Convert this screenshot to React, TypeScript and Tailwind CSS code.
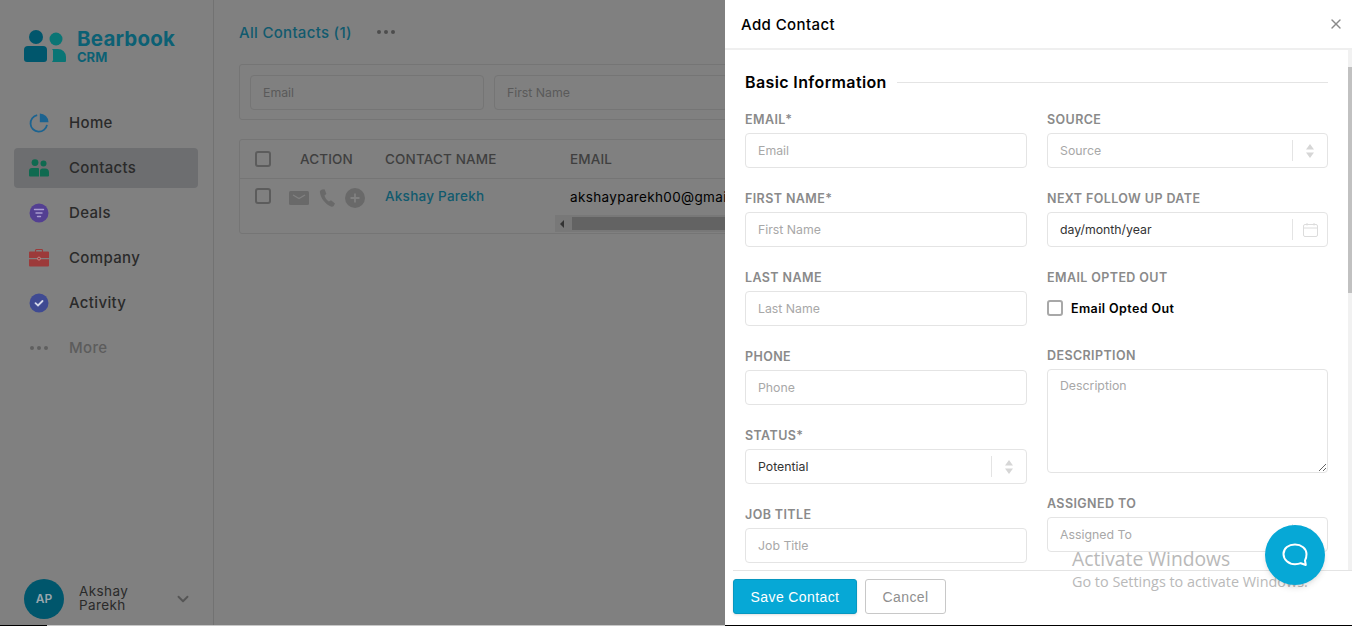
import { ChevronDown, X } from "lucide-react";

const font = "font-['Inter','Liberation_Sans',sans-serif]";

const navItems = [
  { label: "Home", icon: <HomeIcon /> },
  { label: "Contacts", icon: <ContactsIcon />, active: true },
  { label: "Deals", icon: <DealsIcon /> },
  { label: "Company", icon: <CompanyIcon /> },
  { label: "Activity", icon: <ActivityIcon /> },
];

function HomeIcon() {
  return (
    <svg width="20" height="20" viewBox="0 0 20 20" fill="none">
      <path d="M8.200 2.200A8.300 8.300 0 1 0 18 11.800" stroke="#1c6390" strokeWidth="1.800" fill="none" />
      <path d="M10.800 0.500a8.700 8.700 0 0 1 8.700 8.700h-8.700Z" fill="#1c6390" />
    </svg>
  );
}

function ContactsIcon() {
  return (
    <svg width="20" height="18" viewBox="0 0 20 18">
      <circle cx="6" cy="3.600" r="3.400" fill="#0f6a50" />
      <circle cx="14.500" cy="4.600" r="3" fill="#0f6a50" />
      <path d="M0 12a3 3 0 0 1 3-3h6a1.600 1.600 0 0 1 1 .5V17.500H1a1 1 0 0 1-1-1Z" fill="#0f6a50" />
      <path d="M11 11.500a2.400 2.400 0 0 1 2.400-2h2.600a4 4 0 0 1 4 4v3a1 1 0 0 1-1 1h-8Z" fill="#0f6a50" />
    </svg>
  );
}

function DealsIcon() {
  return (
    <svg width="20" height="20" viewBox="0 0 20 20">
      <circle cx="10" cy="10" r="9.500" fill="#533f92" />
      <path d="M5.500 6.500h9M7 10h6M8.500 13.500h3" stroke="#a99cd0" strokeWidth="1.400" strokeLinecap="round" />
    </svg>
  );
}

function CompanyIcon() {
  return (
    <svg width="20" height="18" viewBox="0 0 20 18">
      <path d="M6.500 3V1.500a1 1 0 0 1 1-1h5a1 1 0 0 1 1 1V3" stroke="#9c3a3a" strokeWidth="1.100" fill="none" />
      <path d="M0 3.500a1 1 0 0 1 1-1h18a1 1 0 0 1 1 1V9H0Z" fill="#9c3a3a" />
      <path d="M0 10.200h20V16.500a1 1 0 0 1-1 1H1a1 1 0 0 1-1-1Z" fill="#9c3a3a" />
      <circle cx="10" cy="9.600" r="1.500" fill="#9c3a3a" stroke="#d09090" strokeWidth="0.800" />
    </svg>
  );
}

function ActivityIcon() {
  return (
    <svg width="20" height="20" viewBox="0 0 20 20">
      <circle cx="10" cy="10" r="9.500" fill="#3f4a92" />
      <path d="M6.500 10.200l2.500 2.300 4.500-4.500" stroke="#d5d8ea" strokeWidth="1.800" fill="none" strokeLinecap="round" />
    </svg>
  );
}

function Logo() {
  return (
    <div className="flex items-center pl-[24px] pt-[29px]">
      <svg width="43" height="35" viewBox="0 0 43 35">
        <circle cx="12" cy="8" r="7" fill="#00566c" />
        <circle cx="32" cy="10" r="6.500" fill="#0a7575" />
        <path d="M0 21a4 4 0 0 1 4-4h15a4 4 0 0 1 4 4v9a3 3 0 0 1-3 3H3a3 3 0 0 1-3-3Z" fill="#00566c" />
        <path d="M28 20h6a8 8 0 0 1 8 8v4a1 1 0 0 1-1 1H28a4 4 0 0 0 1-4v-6a3 3 0 0 0-1-3Z" fill="#0a7575" />
      </svg>
      <div className="ml-[10px] -mt-[1px] flex flex-col text-[#0c6074] font-bold">
        <span className="text-[20.500px] leading-[22px] tracking-[0.2px]">Bearbook</span>
        <span className="text-[13px] leading-[14px]">CRM</span>
      </div>
    </div>
  );
}

function Sidebar() {
  return (
    <aside className="w-[214px] h-full shrink-0 flex flex-col border-r border-[#727272]">
      <Logo />
      <nav className="mt-[39px] ml-[14px] w-[184px] flex flex-col gap-[5px]">
        {navItems.map((item) => (
          <div
            key={item.label}
            className={`h-[40px] flex items-center rounded-[4px] ${item.active ? "bg-[#6d6e70]" : ""}`}
          >
            <span className="w-[55px] flex justify-center pr-[5px]">{item.icon}</span>
            <span className="text-[15px] font-medium text-[#2a2a2a] tracking-[0.35px]">{item.label}</span>
          </div>
        ))}
        <div className="h-[40px] flex items-center">
          <span className="w-[55px] flex justify-center gap-[3px] pr-[5px]">
            <i className="size-[4px] rounded-full bg-[#5f5f5f]" />
            <i className="size-[4px] rounded-full bg-[#5f5f5f]" />
            <i className="size-[4px] rounded-full bg-[#5f5f5f]" />
          </span>
          <span className="text-[15px] font-medium text-[#5c5c5c] tracking-[0.35px]">More</span>
        </div>
      </nav>
      <div className="mt-auto mb-[6px] ml-[24px] flex items-center">
        <div className="size-[40px] rounded-full bg-[#00566c] flex items-center justify-center text-[12px] font-semibold text-[#99a6ad]">
          AP
        </div>
        <div className="ml-[15px] -mt-[2px] w-[70px] text-[13.500px] leading-[14px] text-[#2a2a2a] tracking-[0.4px]">
          Akshay
          <br />
          Parekh
        </div>
        <ChevronDown size={18} strokeWidth={2.500} className="ml-[25px] text-[#555555]" />
      </div>
    </aside>
  );
}

function Filter({ label, width }: { label: string; width: string }) {
  return (
    <div className={`${width} h-[35px] shrink-0 border border-[#757575] rounded-[4px] flex items-center pl-[12px] pt-[3px] text-[12.300px] text-[#5a5a5a]`}>
      {label}
    </div>
  );
}

function Box() {
  return <span className="block size-[16px] shrink-0 border-2 border-[#5c5c5c] rounded-[3px]" />;
}

function ContactsTable() {
  return (
    <div className="mt-[19px] w-[700px] h-[95px] border border-[#757575] rounded-[3px]">
      <div className="h-[39px] flex items-center pl-[15px] border-b border-[#757575] text-[13.500px] font-medium text-[#3f3f3f] tracking-[0.15px]">
        <Box />
        <span className="ml-[29px] w-[85px]">ACTION</span>
        <span className="w-[185px]">CONTACT NAME</span>
        <span>EMAIL</span>
      </div>
      <div className="relative h-[54px] flex items-start pl-[15px] pt-[9px]">
        <Box />
        <span className="ml-[18px] w-[96px] flex items-center gap-[10px] text-[#5f5f5f]">
          <svg width="20" height="14" viewBox="0 0 20 14">
            <rect width="20" height="14" rx="1.500" fill="#696969" />
            <path d="M4 4l6 3.500L16 4" stroke="#808080" strokeWidth="1.400" fill="none" />
          </svg>
          <svg width="16" height="18" viewBox="0 0 16 18">
            <path d="M3 .6 5.600 .2 7.400 5 5.500 6.600c.6 2.400 2.200 4.600 4.400 6l2.100-1.400L16 14.400l-1.300 2.600c-.6.800-1.800 1-2.700.6C6.400 15 1.700 9.500.9 3.200.8 2 1.700 1 3 .6Z" fill="#696969" />
          </svg>
          <svg width="20" height="20" viewBox="0 0 20 20">
            <circle cx="10" cy="10" r="10" fill="#696969" />
            <path d="M10 5.500v9M5.500 10h9" stroke="#808080" strokeWidth="1.800" />
          </svg>
        </span>
        <span className="w-[185px] text-[13.500px] font-medium text-[#115a6e] tracking-[0.25px] leading-[17px]">Akshay Parekh</span>
        <span className="mt-[1px] w-[155px] overflow-hidden whitespace-nowrap text-[13.500px] text-black tracking-[0.35px] leading-[17px]">akshayparekh00@gmai</span>
        <div className="absolute left-[315px] right-0 top-[36px] h-[17px] bg-[#787878] flex items-center">
          <span className="ml-[5px] w-0 h-0 border-y-[4px] border-y-transparent border-r-[4px] border-r-[#333333]" />
          <span className="ml-[8px] flex-1 h-[13px] bg-[#636363]" />
        </div>
      </div>
    </div>
  );
}

function Main() {
  return (
    <main className="flex-1 min-w-0 h-full overflow-hidden pl-[25px]">
      <div className="h-[64px] pt-[23px] flex items-start">
        <span className="text-[15px] font-medium text-[#115a6e] leading-[20px] tracking-[0.3px]">All Contacts (1)</span>
        <span className="ml-[25px] mt-[7px] flex gap-[3px]">
          <i className="size-[4px] rounded-full bg-[#4d4d4d]" />
          <i className="size-[4px] rounded-full bg-[#4d4d4d]" />
          <i className="size-[4px] rounded-full bg-[#4d4d4d]" />
        </span>
      </div>
      <div className="w-[700px] h-[56px] border border-[#757575] rounded-[3px] flex items-center gap-[10px] pl-[10px]">
        <Filter label="Email" width="w-[234px]" />
        <Filter label="First Name" width="w-[234px]" />
      </div>
      <ContactsTable />
    </main>
  );
}

function FieldLabel({ children }: { children: React.ReactNode }) {
  return (
    <div className="h-[18px] mb-[5px] text-[12.500px] leading-[20px] font-semibold text-[#8a8a8a] tracking-[0.4px]">
      {children}
    </div>
  );
}

function Field({ label, placeholder }: { label: string; placeholder: string }) {
  return (
    <div className="mb-[21px]">
      <FieldLabel>{label}</FieldLabel>
      <input
        placeholder={placeholder}
        className="block w-full h-[35px] border border-[#e4e4e4] rounded-[4px] px-[12px] text-[12.300px] outline-none placeholder:text-[#a8a8a8]"
      />
    </div>
  );
}

function SelectField({ label, value, muted, icon }: { label: string; value: string; muted?: boolean; icon?: "date" }) {
  return (
    <div className="mb-[21px]">
      <FieldLabel>{label}</FieldLabel>
      <div className="h-[35px] border border-[#e4e4e4] rounded-[4px] flex items-center pl-[12px] text-[12.300px]">
        <span className={`pt-[1px] ${muted ? "text-[#a8a8a8]" : "text-[#333333]"}`}>{value}</span>
        <span className="ml-auto w-[35px] h-[21px] border-l border-[#e4e4e4] flex items-center justify-center">
          {icon === "date" ? (
            <svg width="15" height="14" viewBox="0 0 15 14" fill="none" stroke="#dcdcdc" strokeWidth="1">
              <rect x="0.500" y="1.500" width="14" height="12" rx="1.500" />
              <path d="M.5 5h14M4 0v2.500M11 0v2.500" />
            </svg>
          ) : (
            <svg width="8" height="14" viewBox="0 0 8 14" fill="#d6d6d6">
              <path d="M4 0l4 5.500H0ZM4 14L0 8.500h8Z" />
            </svg>
          )}
        </span>
      </div>
    </div>
  );
}

function Drawer() {
  return (
    <section className="absolute top-0 bottom-[1px] right-0 w-[627px] bg-white flex flex-col">
      <header className="h-[50px] shrink-0 border-b-2 border-[#efefef] pl-[16px] pr-[8px] flex items-center justify-between">
        <h2 className="pt-[3px] text-[15px] font-medium text-black tracking-[0.4px]">Add Contact</h2>
        <X size={16} strokeWidth={2} className="text-[#8a8a8a]" />
      </header>
      <div className="flex-1 min-h-0 flex overflow-hidden">
        <div className="flex-1 pl-[20px] pr-[20px] pt-[22px]">
          <div className="h-[20px] mb-[18px] flex items-center">
            <h3 className="text-[16px] font-semibold text-black tracking-[0.38px] whitespace-nowrap">Basic Information</h3>
            <span className="ml-[10px] flex-1 h-px bg-[#e4e4e4]" />
          </div>
          <div className="grid grid-cols-[282px_281px] gap-x-[20px]">
            <div>
              <Field label="EMAIL*" placeholder="Email" />
              <Field label="FIRST NAME*" placeholder="First Name" />
              <Field label="LAST NAME" placeholder="Last Name" />
              <Field label="PHONE" placeholder="Phone" />
              <SelectField label="STATUS*" value="Potential" />
              <Field label="JOB TITLE" placeholder="Job Title" />
            </div>
            <div>
              <SelectField label="SOURCE" value="Source" muted />
              <SelectField label="NEXT FOLLOW UP DATE" value="day/month/year" icon="date" />
              <div className="mb-[20px]">
                <FieldLabel>EMAIL OPTED OUT</FieldLabel>
                <div className="h-[35px] flex items-center">
                  <span className="block -mt-[2px] size-[16px] border-2 border-[#a8a8a8] rounded-[3px]" />
                  <span className="ml-[8px] pt-[2px] text-[12.500px] font-semibold text-black tracking-[0.4px]">Email Opted Out</span>
                </div>
              </div>
              <div className="mb-[21px]">
                <FieldLabel>DESCRIPTION</FieldLabel>
                <textarea
                  placeholder="Description"
                  className="block w-full h-[104px] border border-[#e4e4e4] rounded-[4px] px-[12px] py-[7px] text-[12.300px] outline-none placeholder:text-[#a8a8a8]"
                />
              </div>
              <SelectField label="ASSIGNED TO" value="Assigned To" muted />
            </div>
          </div>
        </div>
        <div className="w-[4px] shrink-0 bg-[#f1f1f1] pt-[17px]">
          <div className="h-[226px] bg-[#c1c1c1]" />
        </div>
      </div>
      <footer className="h-[55px] shrink-0 ml-[8px] border-t border-[#e4e4e4] pt-[8px] flex items-start gap-[8px] bg-white relative">
        <button className="w-[124px] h-[35px] pt-[1px] rounded-[3px] bg-[#06a8d6] border border-[#0697c0] text-white text-[14px] tracking-[0.4px] font-['Liberation_Sans',sans-serif] shadow-sm">
          Save Contact
        </button>
        <button className="w-[81px] h-[35px] pt-[1px] rounded-[3px] border border-[#c8c8c8] text-[#8f8f8f] text-[14px] tracking-[0.4px] font-['Liberation_Sans',sans-serif]">
          Cancel
        </button>
      </footer>
    </section>
  );
}

export default function App() {
  return (
    <div className={`relative w-[1352px] h-[626px] overflow-hidden flex flex-col ${font}`}>
      <div className="flex-1 min-h-0 flex bg-[#808080]">
        <Sidebar />
        <Main />
      </div>
      <div className="h-px shrink-0 flex">
        <span className="w-[47px] bg-black" />
        <span className="w-[678px] bg-[#c8c8c8]" />
        <span className="flex-1 bg-black" />
      </div>
      <Drawer />
      {/* Windows watermark sits on top of the page */}
      <div className="absolute left-[1072px] top-[546px] font-['Open_Sans',sans-serif] text-[#b9b9b9] pointer-events-none whitespace-nowrap">
        <div className="text-[19.300px] leading-[26px]">Activate Windows</div>
        <div className="text-[14.400px] leading-[20px]">Go to Settings to activate Windows.</div>
      </div>
      <div className="absolute left-[1265px] top-[525px] size-[60px] rounded-full bg-[#06a8d6] shadow-md flex items-center justify-center">
        <svg width="26" height="24" viewBox="0 0 26 24" fill="none" stroke="white" strokeWidth="2">
          <path d="M13 1.500c6.300 0 11.500 4 11.500 9.500 0 2.800-.6 5-1.500 6.500l.8 4.500-5-1.800c-1.800.8-3.600 1-5.800 1C6.700 21.200 1.500 16.800 1.500 11S6.700 1.500 13 1.500Z" strokeLinejoin="round" />
        </svg>
      </div>
    </div>
  );
}
